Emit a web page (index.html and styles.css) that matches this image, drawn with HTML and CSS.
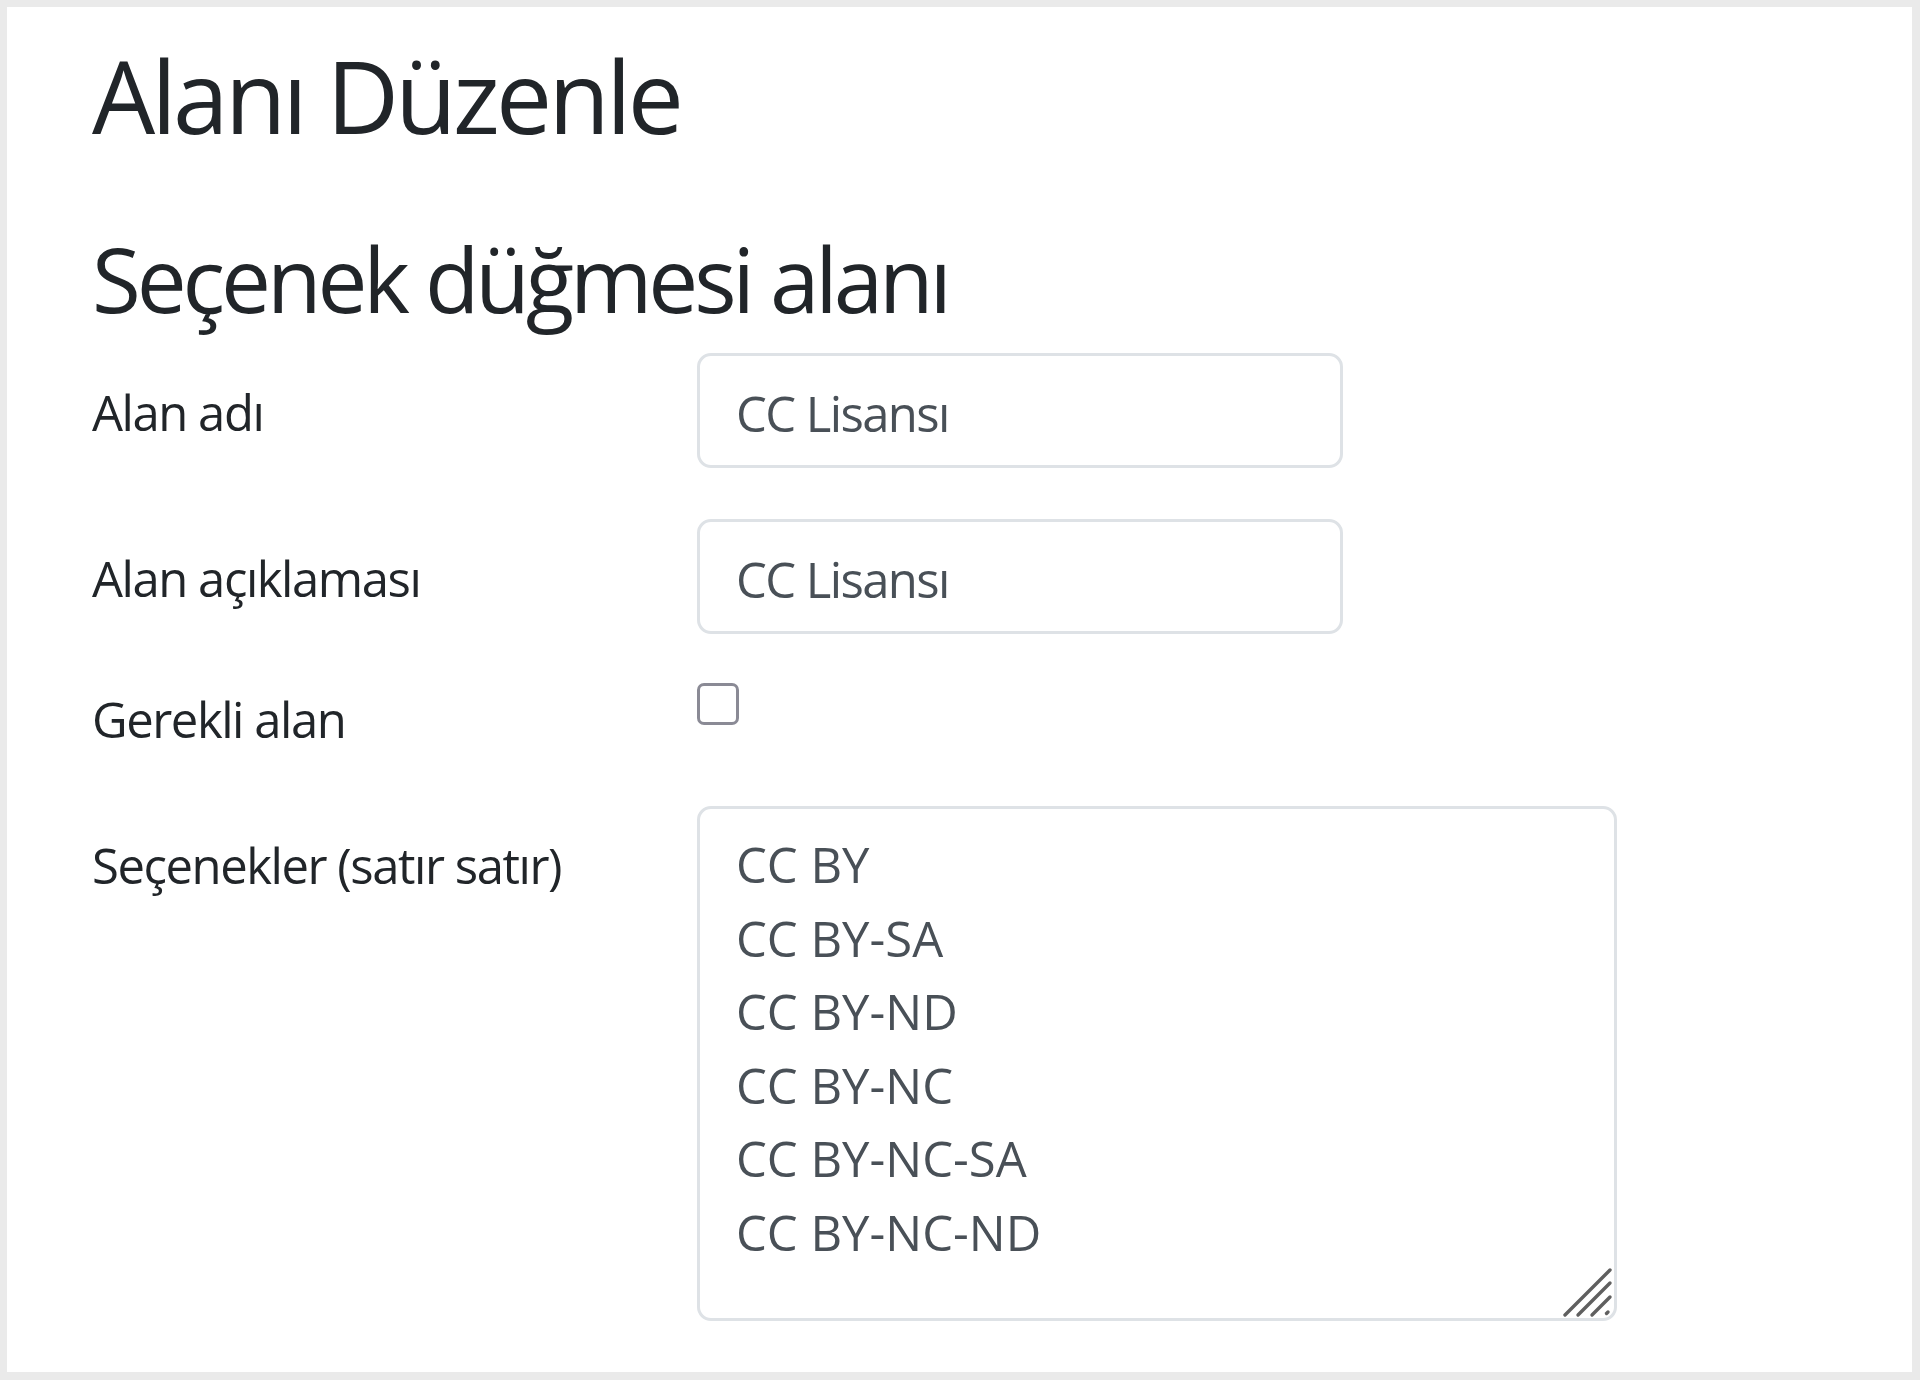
FILE: index.html
```html
<!DOCTYPE html>
<html lang="tr">
<head>
<meta charset="utf-8">
<title>Alanı Düzenle</title>
<link rel="stylesheet" href="styles.css">
</head>
<body>
<main class="card">
  <h1 class="title">Alanı Düzenle</h1>
  <h2 class="subtitle">Seçenek düğmesi alanı</h2>
  <form class="form">
    <div class="row row-input">
      <label class="label" for="f-name">Alan adı</label>
      <input class="control" id="f-name" type="text" value="CC Lisansı">
    </div>
    <div class="row row-input row-gap">
      <label class="label" for="f-desc">Alan açıklaması</label>
      <input class="control" id="f-desc" type="text" value="CC Lisansı">
    </div>
    <div class="row row-check">
      <label class="label label-check" for="f-req">Gerekli alan</label>
      <input class="check" id="f-req" type="checkbox">
    </div>
    <div class="row row-area">
      <label class="label" for="f-opts">Seçenekler (satır satır)</label>
      <div class="area-wrap">
        <textarea class="area" id="f-opts">CC BY
CC BY-SA
CC BY-ND
CC BY-NC
CC BY-NC-SA
CC BY-NC-ND</textarea>
        <svg class="grip" width="56" height="56" viewBox="0 0 56 56" aria-hidden="true">
          <g stroke="#5f5f5f" stroke-width="3.4" stroke-linecap="round" fill="none">
            <line x1="4" y1="50" x2="49" y2="5"/>
            <line x1="17" y1="50" x2="49" y2="18"/>
            <line x1="31" y1="50" x2="49" y2="32"/>
            <line x1="45.5" y1="48.5" x2="47" y2="47"/>
          </g>
        </svg>
      </div>
    </div>
  </form>
</main>
</body>
</html>
```

FILE: styles.css
```css
html, body {
  margin: 0;
  padding: 0;
}

body {
  background: #eaeaea;
  padding: 7px 8px 8px 7px;
  font-family: "Open Sans", "Noto Sans", sans-serif;
  color: #212529;
}

.card {
  background: #ffffff;
  min-height: 1365px;
  box-sizing: border-box;
  padding: 28px 0 0 85px;
}

.title {
  margin: 0;
  font-size: 100px;
  line-height: 120px;
  font-weight: 400;
  letter-spacing: -3.7px;
}

.subtitle {
  margin: 70px 0 0;
  font-size: 89px;
  line-height: 107px;
  font-weight: 400;
  letter-spacing: -4.1px;
}

.form {
  margin-top: 21px;
}

.row {
  display: grid;
  grid-template-columns: 605px auto;
  align-items: start;
}

.row-gap {
  margin-top: 51px;
}

.label {
  font-size: 49px;
  line-height: 73.5px;
  padding-top: 23px;
  color: #212529;
  letter-spacing: -1.45px;
}

.control {
  box-sizing: border-box;
  width: 646px;
  height: 115px;
  margin: 0;
  padding: 5px 36px 0;
  border: 3px solid #dee2e6;
  border-radius: 14px;
  font-family: inherit;
  font-size: 49px;
  line-height: 73.5px;
  letter-spacing: -1.6px;
  color: #495057;
  background: #ffffff;
  outline: none;
}

.row-check {
  margin-top: 49px;
  height: 74px;
}

.label-check {
  padding-top: 0;
}

.check {
  appearance: none;
  -webkit-appearance: none;
  box-sizing: border-box;
  width: 42px;
  height: 42px;
  margin: 0;
  border: 3.5px solid #8a8a95;
  border-radius: 7px;
  background: #ffffff;
}

.row-area {
  margin-top: 49px;
}

.area-wrap {
  position: relative;
  width: 920px;
  height: 515px;
}

.area {
  box-sizing: border-box;
  display: block;
  width: 920px;
  height: 515px;
  margin: 0;
  padding: 19px 36px;
  border: 3px solid #dee2e6;
  border-radius: 14px;
  font-family: inherit;
  font-size: 49px;
  line-height: 73.5px;
  color: #495057;
  background: #ffffff;
  resize: none;
  outline: none;
  overflow: hidden;
}

.grip {
  position: absolute;
  right: 0;
  bottom: 0;
}
```
